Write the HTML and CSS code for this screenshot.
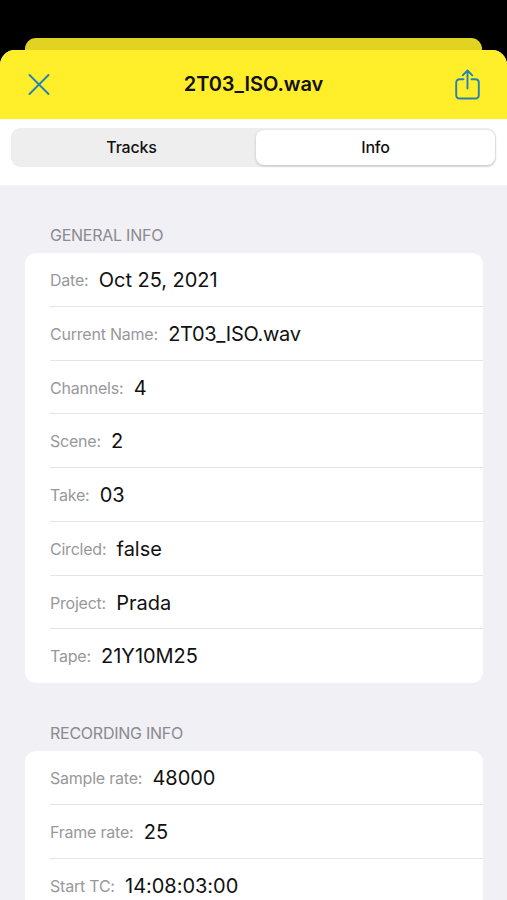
FILE: index.html
```html
<!DOCTYPE html>
<html lang="en">
<head>
<meta charset="utf-8">
<title>2T03_ISO.wav</title>
<link rel="stylesheet" href="styles.css">
</head>
<body>
<div class="backdrop"></div>
<main class="sheet">
  <header class="navbar">
    <svg class="icon" width="32" height="40" viewBox="0 0 32 40"><path d="M6.5 10 25.5 29M25.5 10 6.5 29"/></svg>
    <h1 class="title">2T03_ISO.wav</h1>
    <svg class="icon share" width="32" height="40" viewBox="0 0 32 40"><path d="M12.5 14.2H8.7Q5.2 14.2 5.2 17.7V30Q5.2 33.5 8.7 33.5H24.3Q27.8 33.5 27.8 30V17.7Q27.8 14.2 24.3 14.2H20.5M16.5 23.5V5.7M11.7 10.3 16.5 5.5 21.3 10.3"/></svg>
  </header>
  <div class="toolbar">
    <div class="segments">
      <div class="segment">Tracks</div>
      <div class="segment selected">Info</div>
    </div>
  </div>
  <section class="group">
    <h2 class="heading general">GENERAL INFO</h2>
    <div class="card">
      <div class="row"><span class="label">Date:</span><span class="value">Oct 25, 2021</span></div>
      <div class="row"><span class="label">Current Name:</span><span class="value filename">2T03_ISO.wav</span></div>
      <div class="row"><span class="label">Channels:</span><span class="value">4</span></div>
      <div class="row"><span class="label">Scene:</span><span class="value">2</span></div>
      <div class="row"><span class="label">Take:</span><span class="value">03</span></div>
      <div class="row"><span class="label">Circled:</span><span class="value">false</span></div>
      <div class="row"><span class="label">Project:</span><span class="value">Prada</span></div>
      <div class="row"><span class="label">Tape:</span><span class="value">21Y10M25</span></div>
    </div>
  </section>
  <section class="group">
    <h2 class="heading">RECORDING INFO</h2>
    <div class="card open">
      <div class="row"><span class="label">Sample rate:</span><span class="value">48000</span></div>
      <div class="row"><span class="label">Frame rate:</span><span class="value">25</span></div>
      <div class="row"><span class="label">Start TC:</span><span class="value">14:08:03:00</span></div>
    </div>
  </section>
</main>
</body>
</html>
```
FILE: styles.css
```css
* { box-sizing: border-box; }
body {
  margin: 0;
  height: 900px;
  overflow: hidden;
  background: #000;
  color: #111;
  font-family: Inter, "Liberation Sans", sans-serif;
  display: flex;
  flex-direction: column;
}
.backdrop {
  flex: none;
  height: 12px;
  margin: 38px 25px 0;
  border-radius: 11px 11px 0 0;
  background: #e2d222;
}
.sheet {
  flex: 1;
  min-height: 0;
  overflow: hidden;
  background: #f1f0f5;
  border-radius: 15px 15px 0 0;
}
.navbar {
  height: 69px;
  padding: 0 24px 0 23px;
  display: flex;
  align-items: center;
  justify-content: space-between;
  background: #ffee29;
}
.icon {
  fill: none;
  stroke: #2383b2;
  stroke-width: 1.9;
  stroke-linecap: round;
  stroke-linejoin: round;
}
.title {
  margin: 0;
  padding: 0 0 1px 1px;
  font-size: 20px;
  font-weight: 600;
  letter-spacing: -0.05px;
}
.toolbar {
  height: 67px;
  padding: 9px 11px 0;
  background: #fff;
  border-bottom: 1px solid #f4f4f6;
}
.segments {
  height: 39px;
  padding: 2px 1px 2px 0;
  display: flex;
  border-radius: 9px;
  background: #eee;
}
.segment {
  flex: 1;
  display: flex;
  align-items: center;
  justify-content: center;
  padding: 0 4px 1px 0;
  font-size: 16px;
  font-weight: 500;
  letter-spacing: -0.2px;
}
.selected {
  flex: 0 0 239px;
  padding-right: 0;
  border-radius: 8px;
  background: #fff;
  box-shadow: 0 1px 3px rgba(0, 0, 0, .2);
}
.group { padding: 0 24px 0 25px; }
.heading {
  height: 68px;
  margin: 0;
  padding: 40px 0 0 25px;
  font-size: 16px;
  line-height: 20px;
  font-weight: 400;
  letter-spacing: -0.25px;
  color: #8a8a8f;
}
.general {
  height: 67px;
  padding-top: 39px;
}
.card {
  border-radius: 11px;
  background: #fff;
}
.open { border-radius: 11px 11px 0 0; }
.row {
  height: 53.75px;
  margin-left: 25px;
  padding-top: 1.4px;
  display: flex;
  align-items: center;
  gap: 10.3px;
  border-bottom: 1px solid #e5e5e7;
}
.card:not(.open) .row:last-child { border-bottom-color: transparent; }
.label {
  font-size: 16px;
  letter-spacing: -0.22px;
  color: #98989b;
}
.value {
  font-size: 20px;
  letter-spacing: -0.03px;
}
.filename { letter-spacing: -0.3px; }
```
